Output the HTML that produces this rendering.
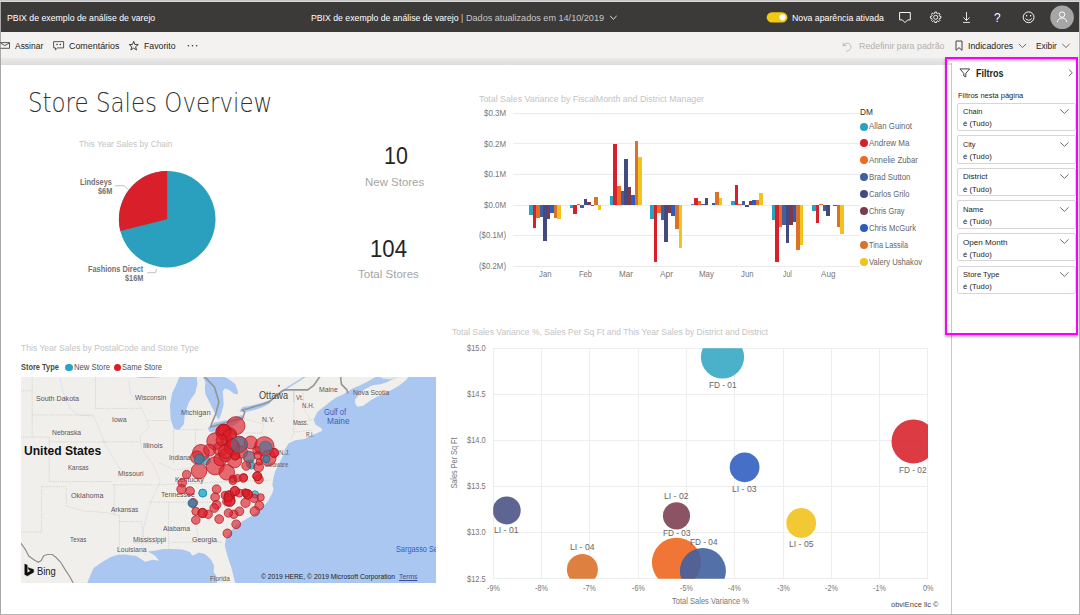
<!DOCTYPE html>
<html lang="pt-BR"><head><meta charset="utf-8"><title>PBIX de exemplo de análise de varejo</title><style>html,body{margin:0;padding:0}body{width:1080px;height:615px;overflow:hidden;background:#fff;position:relative;font-family:"Liberation Sans", sans-serif}.t{position:absolute;white-space:nowrap;transform-origin:0 50%;display:block}</style></head>
<body>
<div style="position:absolute;left:0;top:0;width:1080px;height:1px;background:#c6c6c6"></div>
<div style="position:absolute;left:0;top:1px;width:1080px;height:1px;background:#d9d9d9"></div>
<div style="position:absolute;left:0;top:2px;width:1080px;height:30px;background:#3b3a39"></div>
<div style="position:absolute;left:0;top:32px;width:1080px;height:26px;background:#f3f2f1"></div>
<div style="position:absolute;left:0;top:58px;width:952px;height:7px;background:linear-gradient(#e9e9e9,#dcdcdc)"></div>
<div style="position:absolute;left:951px;top:58px;width:129px;height:557px;background:#fff;border-left:1px solid #c8c8c8;box-sizing:border-box"></div>
<div style="position:absolute;left:947.5px;top:59px;width:128.5px;height:4px;background:linear-gradient(#b8b8b8,#e4e4e4 50%,#ffffff)"></div>
<div style="position:absolute;left:0;top:2px;width:1px;height:613px;background:#a8a8a8"></div>
<div style="position:absolute;left:1079px;top:2px;width:1px;height:613px;background:#b4b4b4"></div>
<div style="position:absolute;left:0;top:614px;width:1080px;height:1px;background:#b4b4b4"></div>
<div style="position:absolute;left:957px;top:102.50px;width:118.5px;height:28.4px;border:1px solid #d6d6d6;border-radius:2px;box-sizing:border-box;background:#fff"></div>
<svg style="position:absolute;left:1059px;top:107.90px" width="11" height="7" viewBox="0 0 11 7"><path d="M1.2 1.3 L5.4 5.4 L9.6 1.3" fill="none" stroke="#605e5c" stroke-width="0.9"/></svg>
<div style="position:absolute;left:957px;top:135.12px;width:118.5px;height:28.4px;border:1px solid #d6d6d6;border-radius:2px;box-sizing:border-box;background:#fff"></div>
<svg style="position:absolute;left:1059px;top:140.52px" width="11" height="7" viewBox="0 0 11 7"><path d="M1.2 1.3 L5.4 5.4 L9.6 1.3" fill="none" stroke="#605e5c" stroke-width="0.9"/></svg>
<div style="position:absolute;left:957px;top:167.74px;width:118.5px;height:28.4px;border:1px solid #d6d6d6;border-radius:2px;box-sizing:border-box;background:#fff"></div>
<svg style="position:absolute;left:1059px;top:173.14px" width="11" height="7" viewBox="0 0 11 7"><path d="M1.2 1.3 L5.4 5.4 L9.6 1.3" fill="none" stroke="#605e5c" stroke-width="0.9"/></svg>
<div style="position:absolute;left:957px;top:200.36px;width:118.5px;height:28.4px;border:1px solid #d6d6d6;border-radius:2px;box-sizing:border-box;background:#fff"></div>
<svg style="position:absolute;left:1059px;top:205.76px" width="11" height="7" viewBox="0 0 11 7"><path d="M1.2 1.3 L5.4 5.4 L9.6 1.3" fill="none" stroke="#605e5c" stroke-width="0.9"/></svg>
<div style="position:absolute;left:957px;top:232.98px;width:118.5px;height:28.4px;border:1px solid #d6d6d6;border-radius:2px;box-sizing:border-box;background:#fff"></div>
<svg style="position:absolute;left:1059px;top:238.38px" width="11" height="7" viewBox="0 0 11 7"><path d="M1.2 1.3 L5.4 5.4 L9.6 1.3" fill="none" stroke="#605e5c" stroke-width="0.9"/></svg>
<div style="position:absolute;left:957px;top:265.60px;width:118.5px;height:28.4px;border:1px solid #d6d6d6;border-radius:2px;box-sizing:border-box;background:#fff"></div>
<svg style="position:absolute;left:1059px;top:271.00px" width="11" height="7" viewBox="0 0 11 7"><path d="M1.2 1.3 L5.4 5.4 L9.6 1.3" fill="none" stroke="#605e5c" stroke-width="0.9"/></svg>
<svg style="position:absolute;left:0;top:0" width="300" height="300" viewBox="0 0 300 300"><circle cx="167.20" cy="219.20" r="48.30" fill="#2ba0be"/><path d="M167.20 219.20 L167.20 170.90 A48.30 48.30 0 0 0 120.38 231.05 Z" fill="#d81f2a"/><path d="M115.1 185.7 L123.9 185.7 L127.9 189.4" fill="none" stroke="#a6a6a6" stroke-width="0.7"/><path d="M147.2 272.7 L155.4 272.7 L156.8 268.7" fill="none" stroke="#a6a6a6" stroke-width="0.7"/></svg>
<svg style="position:absolute;left:0;top:0" width="950" height="300" viewBox="0 0 950 300" shape-rendering="crispEdges"><rect x="513" y="112.95" width="346.5" height="1" fill="#ebebeb"/><rect x="513" y="143.48" width="346.5" height="1" fill="#ebebeb"/><rect x="513" y="174.01" width="346.5" height="1" fill="#ebebeb"/><rect x="513" y="204.54" width="346.5" height="1" fill="#ebebeb"/><rect x="513" y="235.07" width="346.5" height="1" fill="#ebebeb"/><rect x="513" y="265.60" width="346.5" height="1" fill="#ebebeb"/><rect x="529.10" y="205.00" width="3.52" height="10.00" fill="#2ba2c0"/><rect x="532.62" y="205.00" width="3.52" height="22.80" fill="#d8202a"/><rect x="536.14" y="205.00" width="3.52" height="13.00" fill="#ee6a24"/><rect x="539.66" y="205.00" width="3.52" height="11.80" fill="#40609f"/><rect x="543.18" y="205.00" width="3.52" height="35.50" fill="#434a80"/><rect x="546.70" y="205.00" width="3.52" height="14.00" fill="#7b3b4d"/><rect x="550.22" y="205.00" width="3.52" height="8.40" fill="#2c5cc0"/><rect x="553.74" y="205.00" width="3.52" height="13.00" fill="#da722a"/><rect x="557.26" y="205.00" width="3.52" height="14.00" fill="#f1c31e"/><rect x="569.52" y="205.00" width="3.52" height="2.70" fill="#2ba2c0"/><rect x="573.04" y="205.00" width="3.52" height="9.00" fill="#d8202a"/><rect x="576.56" y="204.00" width="3.52" height="1.00" fill="#ee6a24"/><rect x="580.08" y="205.00" width="3.52" height="2.70" fill="#40609f"/><rect x="583.60" y="199.30" width="3.52" height="5.70" fill="#434a80"/><rect x="587.12" y="201.60" width="3.52" height="3.40" fill="#7b3b4d"/><rect x="590.64" y="205.00" width="3.52" height="1.00" fill="#2c5cc0"/><rect x="594.16" y="196.80" width="3.52" height="8.20" fill="#da722a"/><rect x="597.68" y="205.00" width="3.52" height="4.50" fill="#f1c31e"/><rect x="609.94" y="196.30" width="3.52" height="8.70" fill="#2ba2c0"/><rect x="613.46" y="144.40" width="3.52" height="60.60" fill="#d8202a"/><rect x="616.98" y="186.10" width="3.52" height="18.90" fill="#ee6a24"/><rect x="620.50" y="191.30" width="3.52" height="13.70" fill="#40609f"/><rect x="624.02" y="159.20" width="3.52" height="45.80" fill="#434a80"/><rect x="627.54" y="187.20" width="3.52" height="17.80" fill="#7b3b4d"/><rect x="631.06" y="194.50" width="3.52" height="10.50" fill="#2c5cc0"/><rect x="634.58" y="141.00" width="3.52" height="64.00" fill="#da722a"/><rect x="638.10" y="156.50" width="3.52" height="48.50" fill="#f1c31e"/><rect x="650.36" y="205.00" width="3.52" height="13.70" fill="#2ba2c0"/><rect x="653.88" y="205.00" width="3.52" height="57.00" fill="#d8202a"/><rect x="657.40" y="205.00" width="3.52" height="8.40" fill="#ee6a24"/><rect x="660.92" y="205.00" width="3.52" height="15.30" fill="#40609f"/><rect x="664.44" y="205.00" width="3.52" height="37.40" fill="#434a80"/><rect x="667.96" y="205.00" width="3.52" height="8.40" fill="#7b3b4d"/><rect x="671.48" y="205.00" width="3.52" height="11.40" fill="#2c5cc0"/><rect x="675.00" y="205.00" width="3.52" height="23.70" fill="#da722a"/><rect x="678.52" y="205.00" width="3.52" height="43.00" fill="#f1c31e"/><rect x="690.78" y="204.30" width="3.52" height="0.70" fill="#2ba2c0"/><rect x="694.30" y="197.50" width="3.52" height="7.50" fill="#d8202a"/><rect x="697.82" y="201.10" width="3.52" height="3.90" fill="#ee6a24"/><rect x="701.34" y="204.00" width="3.52" height="1.00" fill="#40609f"/><rect x="704.86" y="198.20" width="3.52" height="6.80" fill="#434a80"/><rect x="708.38" y="204.50" width="3.52" height="0.50" fill="#7b3b4d"/><rect x="711.90" y="203.40" width="3.52" height="1.60" fill="#2c5cc0"/><rect x="715.42" y="192.20" width="3.52" height="12.80" fill="#da722a"/><rect x="718.94" y="197.50" width="3.52" height="7.50" fill="#f1c31e"/><rect x="731.20" y="201.40" width="3.52" height="3.60" fill="#2ba2c0"/><rect x="734.72" y="185.20" width="3.52" height="19.80" fill="#d8202a"/><rect x="738.24" y="204.00" width="3.52" height="1.00" fill="#ee6a24"/><rect x="741.76" y="200.90" width="3.52" height="4.10" fill="#40609f"/><rect x="745.28" y="205.00" width="3.52" height="2.00" fill="#434a80"/><rect x="748.80" y="200.90" width="3.52" height="4.10" fill="#7b3b4d"/><rect x="752.32" y="199.80" width="3.52" height="5.20" fill="#2c5cc0"/><rect x="755.84" y="199.80" width="3.52" height="5.20" fill="#da722a"/><rect x="759.36" y="193.40" width="3.52" height="11.60" fill="#f1c31e"/><rect x="771.62" y="205.00" width="3.52" height="15.40" fill="#2ba2c0"/><rect x="775.14" y="205.00" width="3.52" height="57.30" fill="#d8202a"/><rect x="778.66" y="205.00" width="3.52" height="21.90" fill="#ee6a24"/><rect x="782.18" y="205.00" width="3.52" height="20.00" fill="#40609f"/><rect x="785.70" y="205.00" width="3.52" height="37.80" fill="#434a80"/><rect x="789.22" y="205.00" width="3.52" height="20.00" fill="#7b3b4d"/><rect x="792.74" y="205.00" width="3.52" height="16.70" fill="#2c5cc0"/><rect x="796.26" y="205.00" width="3.52" height="45.30" fill="#da722a"/><rect x="799.78" y="205.00" width="3.52" height="40.00" fill="#f1c31e"/><rect x="812.04" y="205.00" width="3.52" height="5.70" fill="#2ba2c0"/><rect x="815.56" y="205.00" width="3.52" height="18.20" fill="#d8202a"/><rect x="819.08" y="204.00" width="3.52" height="1.00" fill="#ee6a24"/><rect x="822.60" y="205.00" width="3.52" height="5.70" fill="#40609f"/><rect x="826.12" y="205.00" width="3.52" height="11.00" fill="#434a80"/><rect x="829.64" y="204.50" width="3.52" height="0.50" fill="#7b3b4d"/><rect x="833.16" y="205.00" width="3.52" height="1.00" fill="#2c5cc0"/><rect x="836.68" y="205.00" width="3.52" height="21.90" fill="#da722a"/><rect x="840.20" y="205.00" width="3.52" height="29.40" fill="#f1c31e"/></svg>
<div style="position:absolute;left:860.40px;top:122.50px;width:8px;height:8px;border-radius:50%;background:#2ba2c0"></div>
<div style="position:absolute;left:860.40px;top:139.48px;width:8px;height:8px;border-radius:50%;background:#d8202a"></div>
<div style="position:absolute;left:860.40px;top:156.46px;width:8px;height:8px;border-radius:50%;background:#ee6a24"></div>
<div style="position:absolute;left:860.40px;top:173.44px;width:8px;height:8px;border-radius:50%;background:#40609f"></div>
<div style="position:absolute;left:860.40px;top:190.42px;width:8px;height:8px;border-radius:50%;background:#434a80"></div>
<div style="position:absolute;left:860.40px;top:207.40px;width:8px;height:8px;border-radius:50%;background:#7b3b4d"></div>
<div style="position:absolute;left:860.40px;top:224.38px;width:8px;height:8px;border-radius:50%;background:#2c5cc0"></div>
<div style="position:absolute;left:860.40px;top:241.36px;width:8px;height:8px;border-radius:50%;background:#da722a"></div>
<div style="position:absolute;left:860.40px;top:258.34px;width:8px;height:8px;border-radius:50%;background:#f1c31e"></div>
<svg style="position:absolute;left:0;top:0" width="950" height="615" viewBox="0 0 950 615"><g shape-rendering="crispEdges"><rect x="493.20" y="347.70" width="434.80" height="1" fill="#eeeeee"/><rect x="493.20" y="393.82" width="434.80" height="1" fill="#eeeeee"/><rect x="493.20" y="439.94" width="434.80" height="1" fill="#eeeeee"/><rect x="493.20" y="486.06" width="434.80" height="1" fill="#eeeeee"/><rect x="493.20" y="532.18" width="434.80" height="1" fill="#eeeeee"/><rect x="493.20" y="578.30" width="434.80" height="1" fill="#eeeeee"/><rect x="492.70" y="348.20" width="1" height="230.60" fill="#eeeeee"/><rect x="541.01" y="348.20" width="1" height="230.60" fill="#eeeeee"/><rect x="589.32" y="348.20" width="1" height="230.60" fill="#eeeeee"/><rect x="637.63" y="348.20" width="1" height="230.60" fill="#eeeeee"/><rect x="685.94" y="348.20" width="1" height="230.60" fill="#eeeeee"/><rect x="734.25" y="348.20" width="1" height="230.60" fill="#eeeeee"/><rect x="782.56" y="348.20" width="1" height="230.60" fill="#eeeeee"/><rect x="830.87" y="348.20" width="1" height="230.60" fill="#eeeeee"/><rect x="879.18" y="348.20" width="1" height="230.60" fill="#eeeeee"/><rect x="927.49" y="348.20" width="1" height="230.60" fill="#eeeeee"/></g><clipPath id="pc"><rect x="493.20" y="348.20" width="434.80" height="230.60"/></clipPath><g clip-path="url(#pc)"><circle cx="722.5" cy="357.0" r="21.6" fill="#2ba2c0" fill-opacity="0.85"/><circle cx="913.5" cy="441.4" r="22.0" fill="#d8202a" fill-opacity="0.88"/><circle cx="744.6" cy="467.3" r="14.9" fill="#2c5cc0" fill-opacity="0.88"/><circle cx="801.2" cy="523.0" r="14.9" fill="#f1c31e" fill-opacity="0.90"/><circle cx="506.7" cy="510.4" r="14.0" fill="#434a80" fill-opacity="0.85"/><circle cx="582.4" cy="569.4" r="15.5" fill="#da722a" fill-opacity="0.90"/><circle cx="676.5" cy="515.8" r="13.6" fill="#7b3b4d" fill-opacity="0.88"/><circle cx="676.5" cy="562.3" r="24.6" fill="#ee6a24" fill-opacity="0.92"/><circle cx="702.9" cy="571.0" r="23.0" fill="#40609f" fill-opacity="0.90"/></g></svg>
<div style="position:absolute;left:455.3px;top:463.2px;width:0;height:0"><div id="rot" style="position:absolute;white-space:nowrap;font-size:8.2px;color:#777;line-height:10px;transform:translate(-50%,-50%) rotate(-90deg) scaleX(0.892);">Sales Per Sq Ft</div></div>
<div style="position:absolute;left:65.1px;top:363.5px;width:7.8px;height:7.8px;border-radius:50%;background:#2ba2c0"></div>
<div style="position:absolute;left:113.7px;top:363.5px;width:7.8px;height:7.8px;border-radius:50%;background:#d8202a"></div>
<div style="position:absolute;left:21.4px;top:376.9px;width:414.4px;height:206.5px;overflow:hidden;background:#f1efeb"><svg style="position:absolute;left:0;top:0" width="414.4" height="206.5" viewBox="21.4 376.9 414.4 206.5" font-family="'Liberation Sans', sans-serif"><polygon points="377.9,376.0 373.8,378.1 368.7,381.1 360.6,385.2 353.4,388.2 348.3,391.3 343.2,394.4 336.1,397.6 331.0,401.5 323.3,407.4 317.8,412.0 314.1,419.4 315.9,424.6 321.5,427.8 322.8,430.6 317.8,432.8 313.1,434.6 304.8,438.9 295.6,440.2 289.1,443.1 285.4,449.1 283.0,456.5 279.3,463.9 275.6,471.3 273.6,478.7 272.8,485.2 274.0,489.0 272.5,493.5 268.5,501.0 262.0,508.3 251.0,516.5 240.0,523.0 235.9,525.5 231.9,530.1 226.3,538.2 225.2,545.4 227.8,555.6 231.9,567.8 235.9,584.0 440.0,584.0 440.0,376.0" fill="#a9c7f0"/><polygon points="355.5,399.4 359.5,394.4 364.6,389.3 372.8,385.2 380.9,384.2 387.0,382.1 391.1,380.1 396.2,378.1 401.3,376.0 409.4,376.0 406.4,380.1 401.3,384.2 395.2,388.2 387.0,392.3 377.9,396.4 370.7,400.5 363.6,405.6 357.5,406.6 355.5,403.0" fill="#f1efeb"/><polygon points="378.0,376.0 401.0,376.0 396.0,378.3 390.0,379.2 384.0,378.6" fill="#dfe6f0"/><polygon points="87.2,584.0 90.7,575.3 93.8,568.2 101.0,563.0 111.2,556.9 117.4,554.8 125.6,554.3 131.7,555.3 136.1,555.6 141.2,558.6 145.3,561.7 153.4,559.6 159.5,560.6 155.5,555.6 148.3,551.5 156.5,550.5 163.6,548.9 172.8,548.9 183.0,549.4 190.1,552.0 193.1,555.6 199.3,552.5 205.4,554.0 211.5,559.6 214.5,565.7 214.0,571.9 216.6,576.0 217.6,584.0" fill="#a9c7f0"/><polygon points="180.0,376.0 176.3,385.4 172.6,392.8 170.4,404.6 171.1,419.4 174.1,428.3 179.3,429.8 184.4,423.9 185.2,413.5 189.6,401.7 195.6,392.8 197.8,383.9 197.0,376.0" fill="#a9c7f0"/><polygon points="202.2,376.0 223.7,376.0 229.6,379.4 235.6,383.9 237.8,389.8 238.5,394.3 234.1,393.5 229.6,389.8 225.2,388.3 223.0,391.3 223.7,397.2 224.0,404.6 222.2,412.0 220.0,418.0 218.5,419.4 215.6,413.5 211.9,406.1 208.9,400.2 205.9,394.3 205.2,388.3 205.9,382.4 203.0,376.0" fill="#a9c7f0"/><polygon points="132.0,376.0 140.0,377.6 152.0,377.9 160.0,377.2 163.0,376.0" fill="#a9c7f0"/><polygon points="208.0,428.0 215.0,422.5 228.0,420.0 242.0,415.0 245.0,418.0 235.0,425.0 220.0,431.0 210.0,432.0" fill="#a9c7f0"/><polygon points="240.0,410.6 243.0,406.9 251.9,405.4 263.7,402.4 269.6,400.2 270.4,403.1 263.7,406.9 254.8,409.8 245.9,412.0 240.7,412.0" fill="#a9c7f0"/><polyline points="269.6,401.7 278.5,394.3 283.0,390.6 292.0,385.0 300.0,380.0 306.0,376.0" fill="none" stroke="#a9c7f0" stroke-width="1.6"/><polyline points="294.2,391.0 294.4,402.0" fill="none" stroke="#a9c7f0" stroke-width="0.9"/><polyline points="60.0,377.0 63.0,390.0 66.0,400.0 72.0,410.0 80.0,415.0 94.0,416.0 98.0,425.0 103.0,438.0 110.0,452.0 116.0,462.0 122.0,470.0" fill="none" stroke="#d3dfee" stroke-width="0.7"/><polyline points="129.0,380.0 131.0,393.5 142.2,408.3 149.6,426.9 140.4,436.1 142.2,449.0 153.3,463.9 160.7,481.5 152.0,500.0 146.0,520.0 141.0,540.0 147.0,556.0" fill="none" stroke="#d3dfee" stroke-width="0.7"/><polyline points="32.6,377.0 32.6,436.0" fill="none" stroke="#cbc6c0" stroke-width="0.7" stroke-dasharray="1.2 1.2"/><polyline points="32.6,414.8 94.0,414.8" fill="none" stroke="#cbc6c0" stroke-width="0.7" stroke-dasharray="1.2 1.2"/><polyline points="21.0,390.7 32.6,390.7" fill="none" stroke="#cbc6c0" stroke-width="0.7" stroke-dasharray="1.2 1.2"/><polyline points="21.0,437.0 49.6,437.0 49.6,481.5 112.6,481.5" fill="none" stroke="#cbc6c0" stroke-width="0.7" stroke-dasharray="1.2 1.2"/><polyline points="49.6,441.7 107.0,441.7" fill="none" stroke="#cbc6c0" stroke-width="0.7" stroke-dasharray="1.2 1.2"/><polyline points="95.9,377.0 95.9,408.3 142.2,408.3" fill="none" stroke="#cbc6c0" stroke-width="0.7" stroke-dasharray="1.2 1.2"/><polyline points="103.0,441.7 140.0,441.7" fill="none" stroke="#cbc6c0" stroke-width="0.7" stroke-dasharray="1.2 1.2"/><polyline points="147.8,420.4 170.0,420.4" fill="none" stroke="#cbc6c0" stroke-width="0.7" stroke-dasharray="1.2 1.2"/><polyline points="173.7,430.6 173.7,464.0" fill="none" stroke="#cbc6c0" stroke-width="0.7" stroke-dasharray="1.2 1.2"/><polyline points="195.9,429.6 195.9,453.0" fill="none" stroke="#cbc6c0" stroke-width="0.7" stroke-dasharray="1.2 1.2"/><polyline points="173.7,429.6 205.0,429.6" fill="none" stroke="#cbc6c0" stroke-width="0.7" stroke-dasharray="1.2 1.2"/><polyline points="42.0,486.5 66.7,486.5 66.7,506.0 84.8,511.0 105.6,512.4 118.5,515.0" fill="none" stroke="#cbc6c0" stroke-width="0.7" stroke-dasharray="1.2 1.2"/><polyline points="42.0,486.5 42.0,531.9 21.0,531.9" fill="none" stroke="#cbc6c0" stroke-width="0.7" stroke-dasharray="1.2 1.2"/><polyline points="113.0,484.7 154.8,484.7" fill="none" stroke="#cbc6c0" stroke-width="0.7" stroke-dasharray="1.2 1.2"/><polyline points="114.6,484.7 114.6,515.0" fill="none" stroke="#cbc6c0" stroke-width="0.7" stroke-dasharray="1.2 1.2"/><polyline points="119.8,521.5 141.9,521.5" fill="none" stroke="#cbc6c0" stroke-width="0.7" stroke-dasharray="1.2 1.2"/><polyline points="119.8,515.0 119.8,555.0" fill="none" stroke="#cbc6c0" stroke-width="0.7" stroke-dasharray="1.2 1.2"/><polyline points="141.9,521.5 144.5,539.6 134.0,542.7 157.4,542.7" fill="none" stroke="#cbc6c0" stroke-width="0.7" stroke-dasharray="1.2 1.2"/><polyline points="149.6,502.0 222.0,502.0" fill="none" stroke="#cbc6c0" stroke-width="0.7" stroke-dasharray="1.2 1.2"/><polyline points="169.0,502.0 169.0,552.6" fill="none" stroke="#cbc6c0" stroke-width="0.7" stroke-dasharray="1.2 1.2"/><polyline points="193.2,502.0 198.9,539.6" fill="none" stroke="#cbc6c0" stroke-width="0.7" stroke-dasharray="1.2 1.2"/><polyline points="173.0,542.2 222.0,542.2" fill="none" stroke="#cbc6c0" stroke-width="0.7" stroke-dasharray="1.2 1.2"/><polyline points="157.0,484.7 200.0,483.0 240.0,481.0 272.0,480.0" fill="none" stroke="#cbc6c0" stroke-width="0.7" stroke-dasharray="1.2 1.2"/><polyline points="222.0,502.0 245.0,497.0 262.0,500.0" fill="none" stroke="#cbc6c0" stroke-width="0.7" stroke-dasharray="1.2 1.2"/><polyline points="200.0,483.0 212.0,470.0 225.0,466.0 236.0,458.0" fill="none" stroke="#cbc6c0" stroke-width="0.7" stroke-dasharray="1.2 1.2"/><polyline points="236.0,458.0 250.0,462.0 262.0,458.0" fill="none" stroke="#cbc6c0" stroke-width="0.7" stroke-dasharray="1.2 1.2"/><polyline points="214.0,433.0 214.0,455.0" fill="none" stroke="#cbc6c0" stroke-width="0.7" stroke-dasharray="1.2 1.2"/><polyline points="214.0,433.0 262.0,433.0 268.0,438.0 275.0,441.0" fill="none" stroke="#cbc6c0" stroke-width="0.7" stroke-dasharray="1.2 1.2"/><polyline points="262.0,433.0 264.0,424.0 243.0,418.0" fill="none" stroke="#cbc6c0" stroke-width="0.7" stroke-dasharray="1.2 1.2"/><polyline points="294.3,402.0 294.3,432.0 291.0,440.0" fill="none" stroke="#cbc6c0" stroke-width="0.7" stroke-dasharray="1.2 1.2"/><polyline points="294.3,422.0 318.0,419.0" fill="none" stroke="#cbc6c0" stroke-width="0.7" stroke-dasharray="1.2 1.2"/><polyline points="303.0,390.0 305.0,410.0 311.0,420.0" fill="none" stroke="#cbc6c0" stroke-width="0.7" stroke-dasharray="1.2 1.2"/><polyline points="294.3,432.0 312.0,430.0" fill="none" stroke="#cbc6c0" stroke-width="0.7" stroke-dasharray="1.2 1.2"/><polyline points="222.0,502.0 238.0,526.0" fill="none" stroke="#cbc6c0" stroke-width="0.7" stroke-dasharray="1.2 1.2"/><polyline points="198.9,539.6 222.0,542.2" fill="none" stroke="#cbc6c0" stroke-width="0.7" stroke-dasharray="1.2 1.2"/><polyline points="160.0,463.0 175.0,470.0 190.0,468.0 200.0,483.0" fill="none" stroke="#cbc6c0" stroke-width="0.7" stroke-dasharray="1.2 1.2"/><polyline points="204.4,376.0 214.8,386.9 219.3,401.7 216.3,413.5 211.9,423.9 211.1,426.9 225.0,423.0 243.0,418.0 245.2,412.0 243.0,409.8 248.9,408.3 263.7,403.9 269.6,401.7 278.5,394.3 283.0,390.6 285.9,389.8 308.1,389.8 314.1,385.4 320.6,376.0" fill="none" stroke="#949494" stroke-width="1.6"/><polyline points="340.9,376.0 341.9,384.3 347.4,389.8 348.3,393.5" fill="none" stroke="#949494" stroke-width="1.6"/><polyline points="20.0,541.5 23.5,546.0 26.1,550.0 29.1,555.9 34.3,559.6 38.7,562.2 41.7,560.4 43.9,555.9 47.6,554.4 52.8,554.4 56.5,557.4 60.9,561.9 65.4,569.3 69.8,575.9 73.5,582.6 74.0,584.0" fill="none" stroke="#8f8f8f" stroke-width="1.2"/><circle cx="279.4" cy="385.7" r="1" fill="#e0322c"/><text x="265.6" y="467.3" font-size="7.3" fill="#6e5c5c" textLength="23" lengthAdjust="spacingAndGlyphs">Delaware</text><text x="396.4" y="551.6" font-size="8.6" fill="#3560c0" textLength="46" lengthAdjust="spacingAndGlyphs">Sargasso Sea</text></svg></div><div style="position:absolute;left:21.4px;top:376.9px;width:414.4px;height:206.5px;overflow:hidden;z-index:5"><svg style="position:absolute;left:0;top:0" width="414.4" height="206.5" viewBox="21.4 376.9 414.4 206.5"><circle cx="239.5" cy="444.4" r="8.0" fill="#3fb6d3" fill-opacity="0.8" stroke="#2390ae" stroke-width="0.9"/><circle cx="265.9" cy="447.6" r="6.5" fill="#3fb6d3" fill-opacity="0.8" stroke="#2390ae" stroke-width="0.9"/><circle cx="206.5" cy="460.3" r="4.2" fill="#3fb6d3" fill-opacity="0.8" stroke="#2390ae" stroke-width="0.9"/><circle cx="250.6" cy="463.8" r="3.9" fill="#3fb6d3" fill-opacity="0.8" stroke="#2390ae" stroke-width="0.9"/><circle cx="203.1" cy="493.0" r="3.9" fill="#3fb6d3" fill-opacity="0.8" stroke="#2390ae" stroke-width="0.9"/><circle cx="255.4" cy="494.3" r="3.6" fill="#3fb6d3" fill-opacity="0.8" stroke="#2390ae" stroke-width="0.9"/><circle cx="252.2" cy="465.7" r="3.3" fill="#3fb6d3" fill-opacity="0.8" stroke="#2390ae" stroke-width="0.9"/><circle cx="236.3" cy="425.6" r="9.1" fill="#dc1f2a" fill-opacity="0.64" stroke="#ab121c" stroke-width="0.7"/><circle cx="224.0" cy="432.0" r="7.8" fill="#dc1f2a" fill-opacity="0.64" stroke="#ab121c" stroke-width="0.7"/><circle cx="224.6" cy="431.4" r="6.5" fill="#dc1f2a" fill-opacity="0.64" stroke="#ab121c" stroke-width="0.7"/><circle cx="230.0" cy="434.6" r="7.1" fill="#dc1f2a" fill-opacity="0.64" stroke="#ab121c" stroke-width="0.7"/><circle cx="215.6" cy="441.1" r="8.4" fill="#dc1f2a" fill-opacity="0.64" stroke="#ab121c" stroke-width="0.7"/><circle cx="239.5" cy="444.4" r="8.4" fill="#dc1f2a" fill-opacity="0.64" stroke="#ab121c" stroke-width="0.7"/><circle cx="232.4" cy="447.6" r="7.8" fill="#dc1f2a" fill-opacity="0.64" stroke="#ab121c" stroke-width="0.7"/><circle cx="220.7" cy="448.9" r="7.1" fill="#dc1f2a" fill-opacity="0.64" stroke="#ab121c" stroke-width="0.7"/><circle cx="235.7" cy="455.4" r="4.5" fill="#dc1f2a" fill-opacity="0.64" stroke="#ab121c" stroke-width="0.7"/><circle cx="251.2" cy="442.4" r="6.5" fill="#dc1f2a" fill-opacity="0.64" stroke="#ab121c" stroke-width="0.7"/><circle cx="264.8" cy="446.3" r="9.7" fill="#dc1f2a" fill-opacity="0.64" stroke="#ab121c" stroke-width="0.7"/><circle cx="274.5" cy="452.8" r="4.5" fill="#dc1f2a" fill-opacity="0.64" stroke="#ab121c" stroke-width="0.7"/><circle cx="268.7" cy="458.0" r="7.8" fill="#dc1f2a" fill-opacity="0.64" stroke="#ab121c" stroke-width="0.7"/><circle cx="257.0" cy="450.2" r="3.9" fill="#dc1f2a" fill-opacity="0.64" stroke="#ab121c" stroke-width="0.7"/><circle cx="258.3" cy="455.4" r="3.9" fill="#dc1f2a" fill-opacity="0.64" stroke="#ab121c" stroke-width="0.7"/><circle cx="249.3" cy="456.7" r="5.8" fill="#dc1f2a" fill-opacity="0.64" stroke="#ab121c" stroke-width="0.7"/><circle cx="201.3" cy="452.8" r="8.4" fill="#dc1f2a" fill-opacity="0.64" stroke="#ab121c" stroke-width="0.7"/><circle cx="197.4" cy="457.3" r="6.5" fill="#dc1f2a" fill-opacity="0.64" stroke="#ab121c" stroke-width="0.7"/><circle cx="199.4" cy="470.9" r="7.8" fill="#dc1f2a" fill-opacity="0.64" stroke="#ab121c" stroke-width="0.7"/><circle cx="187.0" cy="474.4" r="4.1" fill="#dc1f2a" fill-opacity="0.64" stroke="#ab121c" stroke-width="0.7"/><circle cx="215.6" cy="465.7" r="9.1" fill="#dc1f2a" fill-opacity="0.64" stroke="#ab121c" stroke-width="0.7"/><circle cx="220.7" cy="459.3" r="6.5" fill="#dc1f2a" fill-opacity="0.64" stroke="#ab121c" stroke-width="0.7"/><circle cx="227.2" cy="472.2" r="7.8" fill="#dc1f2a" fill-opacity="0.64" stroke="#ab121c" stroke-width="0.7"/><circle cx="235.0" cy="460.6" r="7.1" fill="#dc1f2a" fill-opacity="0.64" stroke="#ab121c" stroke-width="0.7"/><circle cx="246.7" cy="465.7" r="4.5" fill="#dc1f2a" fill-opacity="0.64" stroke="#ab121c" stroke-width="0.7"/><circle cx="259.0" cy="467.0" r="4.9" fill="#dc1f2a" fill-opacity="0.64" stroke="#ab121c" stroke-width="0.7"/><circle cx="257.7" cy="476.1" r="4.5" fill="#dc1f2a" fill-opacity="0.64" stroke="#ab121c" stroke-width="0.7"/><circle cx="244.1" cy="477.4" r="3.9" fill="#dc1f2a" fill-opacity="0.64" stroke="#ab121c" stroke-width="0.7"/><circle cx="233.7" cy="478.7" r="3.9" fill="#dc1f2a" fill-opacity="0.64" stroke="#ab121c" stroke-width="0.7"/><circle cx="259.6" cy="461.9" r="3.2" fill="#dc1f2a" fill-opacity="0.64" stroke="#ab121c" stroke-width="0.7"/><circle cx="228.0" cy="441.0" r="6.0" fill="#dc1f2a" fill-opacity="0.64" stroke="#ab121c" stroke-width="0.7"/><circle cx="242.0" cy="452.0" r="6.0" fill="#dc1f2a" fill-opacity="0.64" stroke="#ab121c" stroke-width="0.7"/><circle cx="226.0" cy="455.0" r="6.5" fill="#dc1f2a" fill-opacity="0.64" stroke="#ab121c" stroke-width="0.7"/><circle cx="210.0" cy="450.0" r="6.0" fill="#dc1f2a" fill-opacity="0.64" stroke="#ab121c" stroke-width="0.7"/><circle cx="182.6" cy="482.6" r="4.3" fill="#dc1f2a" fill-opacity="0.64" stroke="#ab121c" stroke-width="0.7"/><circle cx="181.9" cy="489.1" r="4.7" fill="#dc1f2a" fill-opacity="0.64" stroke="#ab121c" stroke-width="0.7"/><circle cx="190.4" cy="491.0" r="4.4" fill="#dc1f2a" fill-opacity="0.64" stroke="#ab121c" stroke-width="0.7"/><circle cx="193.6" cy="502.7" r="4.4" fill="#dc1f2a" fill-opacity="0.64" stroke="#ab121c" stroke-width="0.7"/><circle cx="217.0" cy="489.1" r="4.4" fill="#dc1f2a" fill-opacity="0.64" stroke="#ab121c" stroke-width="0.7"/><circle cx="215.5" cy="497.1" r="4.4" fill="#dc1f2a" fill-opacity="0.64" stroke="#ab121c" stroke-width="0.7"/><circle cx="217.0" cy="504.7" r="4.4" fill="#dc1f2a" fill-opacity="0.64" stroke="#ab121c" stroke-width="0.7"/><circle cx="214.7" cy="507.9" r="4.4" fill="#dc1f2a" fill-opacity="0.64" stroke="#ab121c" stroke-width="0.7"/><circle cx="196.2" cy="511.2" r="4.0" fill="#dc1f2a" fill-opacity="0.64" stroke="#ab121c" stroke-width="0.7"/><circle cx="203.0" cy="512.9" r="4.7" fill="#dc1f2a" fill-opacity="0.64" stroke="#ab121c" stroke-width="0.7"/><circle cx="208.6" cy="514.2" r="4.2" fill="#dc1f2a" fill-opacity="0.64" stroke="#ab121c" stroke-width="0.7"/><circle cx="196.2" cy="519.9" r="4.3" fill="#dc1f2a" fill-opacity="0.64" stroke="#ab121c" stroke-width="0.7"/><circle cx="219.6" cy="519.0" r="4.4" fill="#dc1f2a" fill-opacity="0.64" stroke="#ab121c" stroke-width="0.7"/><circle cx="225.5" cy="495.2" r="4.0" fill="#dc1f2a" fill-opacity="0.64" stroke="#ab121c" stroke-width="0.7"/><circle cx="229.7" cy="495.8" r="5.2" fill="#dc1f2a" fill-opacity="0.64" stroke="#ab121c" stroke-width="0.7"/><circle cx="235.3" cy="491.0" r="4.7" fill="#dc1f2a" fill-opacity="0.64" stroke="#ab121c" stroke-width="0.7"/><circle cx="239.8" cy="493.0" r="4.0" fill="#dc1f2a" fill-opacity="0.64" stroke="#ab121c" stroke-width="0.7"/><circle cx="230.1" cy="500.8" r="5.5" fill="#dc1f2a" fill-opacity="0.64" stroke="#ab121c" stroke-width="0.7"/><circle cx="227.5" cy="501.4" r="4.4" fill="#dc1f2a" fill-opacity="0.64" stroke="#ab121c" stroke-width="0.7"/><circle cx="245.7" cy="492.3" r="3.7" fill="#dc1f2a" fill-opacity="0.64" stroke="#ab121c" stroke-width="0.7"/><circle cx="248.3" cy="494.3" r="4.7" fill="#dc1f2a" fill-opacity="0.64" stroke="#ab121c" stroke-width="0.7"/><circle cx="254.5" cy="498.2" r="4.2" fill="#dc1f2a" fill-opacity="0.64" stroke="#ab121c" stroke-width="0.7"/><circle cx="261.0" cy="497.3" r="3.7" fill="#dc1f2a" fill-opacity="0.64" stroke="#ab121c" stroke-width="0.7"/><circle cx="245.9" cy="502.7" r="4.7" fill="#dc1f2a" fill-opacity="0.64" stroke="#ab121c" stroke-width="0.7"/><circle cx="259.7" cy="505.6" r="4.4" fill="#dc1f2a" fill-opacity="0.64" stroke="#ab121c" stroke-width="0.7"/><circle cx="255.2" cy="511.2" r="4.7" fill="#dc1f2a" fill-opacity="0.64" stroke="#ab121c" stroke-width="0.7"/><circle cx="239.8" cy="511.2" r="4.4" fill="#dc1f2a" fill-opacity="0.64" stroke="#ab121c" stroke-width="0.7"/><circle cx="234.2" cy="514.2" r="4.2" fill="#dc1f2a" fill-opacity="0.64" stroke="#ab121c" stroke-width="0.7"/><circle cx="228.8" cy="512.9" r="4.2" fill="#dc1f2a" fill-opacity="0.64" stroke="#ab121c" stroke-width="0.7"/><circle cx="236.6" cy="524.2" r="4.4" fill="#dc1f2a" fill-opacity="0.64" stroke="#ab121c" stroke-width="0.7"/><circle cx="227.8" cy="533.3" r="4.4" fill="#dc1f2a" fill-opacity="0.64" stroke="#ab121c" stroke-width="0.7"/><circle cx="233.3" cy="480.6" r="3.9" fill="#dc1f2a" fill-opacity="0.64" stroke="#ab121c" stroke-width="0.7"/><circle cx="237.9" cy="478.0" r="3.7" fill="#dc1f2a" fill-opacity="0.64" stroke="#ab121c" stroke-width="0.7"/><circle cx="243.7" cy="478.0" r="4.2" fill="#dc1f2a" fill-opacity="0.64" stroke="#ab121c" stroke-width="0.7"/><circle cx="259.3" cy="479.3" r="4.4" fill="#dc1f2a" fill-opacity="0.64" stroke="#ab121c" stroke-width="0.7"/><circle cx="224.0" cy="432.0" r="7.6" fill="#dc1f2a" fill-opacity="0.64" stroke="#ab121c" stroke-width="0.7"/><circle cx="224.6" cy="430.7" r="6.2" fill="#dc1f2a" fill-opacity="0.64" stroke="#ab121c" stroke-width="0.7"/><circle cx="229.8" cy="435.9" r="6.5" fill="#dc1f2a" fill-opacity="0.64" stroke="#ab121c" stroke-width="0.7"/><circle cx="232.4" cy="447.0" r="7.6" fill="#dc1f2a" fill-opacity="0.64" stroke="#ab121c" stroke-width="0.7"/><circle cx="226.0" cy="451.5" r="7.0" fill="#dc1f2a" fill-opacity="0.64" stroke="#ab121c" stroke-width="0.7"/><circle cx="235.7" cy="455.4" r="4.5" fill="#dc1f2a" fill-opacity="0.64" stroke="#ab121c" stroke-width="0.7"/><circle cx="233.0" cy="444.0" r="5.5" fill="#dc1f2a" fill-opacity="0.64" stroke="#ab121c" stroke-width="0.7"/><circle cx="222.0" cy="440.0" r="5.5" fill="#dc1f2a" fill-opacity="0.64" stroke="#ab121c" stroke-width="0.7"/><circle cx="274.5" cy="452.8" r="4.5" fill="#dc1f2a" fill-opacity="0.64" stroke="#ab121c" stroke-width="0.7"/><circle cx="229.7" cy="495.8" r="5.0" fill="#dc1f2a" fill-opacity="0.64" stroke="#ab121c" stroke-width="0.7"/><circle cx="235.3" cy="491.0" r="4.6" fill="#dc1f2a" fill-opacity="0.64" stroke="#ab121c" stroke-width="0.7"/><circle cx="248.3" cy="494.3" r="4.6" fill="#dc1f2a" fill-opacity="0.64" stroke="#ab121c" stroke-width="0.7"/><circle cx="230.1" cy="500.8" r="5.2" fill="#dc1f2a" fill-opacity="0.64" stroke="#ab121c" stroke-width="0.7"/><circle cx="257.7" cy="476.1" r="4.4" fill="#dc1f2a" fill-opacity="0.64" stroke="#ab121c" stroke-width="0.7"/><circle cx="228.5" cy="497.5" r="4.2" fill="#dc1f2a" fill-opacity="0.64" stroke="#ab121c" stroke-width="0.7"/><circle cx="246.5" cy="493.0" r="3.8" fill="#dc1f2a" fill-opacity="0.64" stroke="#ab121c" stroke-width="0.7"/><circle cx="203.0" cy="512.9" r="4.5" fill="#dc1f2a" fill-opacity="0.64" stroke="#ab121c" stroke-width="0.7"/><circle cx="199.7" cy="459.3" r="4.9" fill="#3f7fa3" fill-opacity="0.85" stroke="#1b6f8c" stroke-width="0.9"/><circle cx="266.8" cy="459.0" r="3.6" fill="#3f7fa3" fill-opacity="0.85" stroke="#1b6f8c" stroke-width="0.9"/><circle cx="192.7" cy="503.1" r="4.2" fill="#3f7fa3" fill-opacity="0.85" stroke="#1b6f8c" stroke-width="0.9"/><circle cx="203.1" cy="493.0" r="3.9" fill="#3fb6d3" fill-opacity="0.8" stroke="#2390ae" stroke-width="0.9"/><circle cx="239.5" cy="444.4" r="7.6" fill="#3a8fb3" fill-opacity="0.42" stroke="#2390ae" stroke-opacity="0.8" stroke-width="0.9"/><circle cx="265.9" cy="447.6" r="6.3" fill="#3a8fb3" fill-opacity="0.42" stroke="#2390ae" stroke-opacity="0.8" stroke-width="0.9"/><circle cx="249.3" cy="456.7" r="5.2" fill="#3a8fb3" fill-opacity="0.42" stroke="#2390ae" stroke-opacity="0.8" stroke-width="0.9"/><path d="M25.1 563.9 L27.7 564.8 L27.7 572.7 L31.3 570.7 L29.4 569.9 L28.3 567.3 L34.1 569.3 L34.1 572.2 L27.7 576 L25.1 574.5 Z" fill="#0c0c0c" stroke="#0c0c0c" stroke-width="0.3"/></svg></div>
<div style="position:absolute;left:945px;top:56.9px;width:133.2px;height:278.3px;border:2.5px solid #fa00fa;box-sizing:border-box;box-shadow:0 1.5px 2.5px rgba(0,0,0,0.33);z-index:9"></div>
<svg style="position:absolute;left:0;top:0;z-index:4" width="1080" height="62" viewBox="0 0 1080 62" fill="none" stroke-linecap="butt"><path d="M610.2 16 L613.4 19.2 L616.6 16" stroke="#ffffff" stroke-width="0.9"/><rect x="766.7" y="12.2" width="20.7" height="10.3" rx="5.15" fill="#f2c811"/><circle cx="782.5" cy="17.35" r="3.1" fill="#ffffff"/><path d="M899.6 12.5 H910.3 V19.9 H907.7 L905 22.6 L902.3 19.9 H899.6 Z" stroke="#ffffff" stroke-width="0.95" stroke-linejoin="miter"/><path d="M934.79 12.08 L936.61 12.08 L936.66 13.31 L937.84 13.80 L938.75 12.96 L940.04 14.25 L939.20 15.16 L939.69 16.34 L940.92 16.39 L940.92 18.21 L939.69 18.26 L939.20 19.44 L940.04 20.35 L938.75 21.64 L937.84 20.80 L936.66 21.29 L936.61 22.52 L934.79 22.52 L934.74 21.29 L933.56 20.80 L932.65 21.64 L931.36 20.35 L932.20 19.44 L931.71 18.26 L930.48 18.21 L930.48 16.39 L931.71 16.34 L932.20 15.16 L931.36 14.25 L932.65 12.96 L933.56 13.80 L934.74 13.31 Z" stroke="#ffffff" stroke-width="0.9" stroke-linejoin="round"/><circle cx="935.7" cy="17.3" r="2" stroke="#ffffff" stroke-width="0.9"/><path d="M966.5 12 V20.4 M963.4 17.4 L966.5 20.5 L969.6 17.4 M963.1 22.45 H969.9" stroke="#ffffff" stroke-width="0.85"/><circle cx="1028.6" cy="17.3" r="5.4" stroke="#ffffff" stroke-width="0.95"/><circle cx="1026.6" cy="15.7" r="0.75" fill="#ffffff"/><circle cx="1030.6" cy="15.7" r="0.75" fill="#ffffff"/><path d="M1025.4 18.6 Q1028.6 21.9 1031.8 18.6" stroke="#ffffff" stroke-width="0.9"/><circle cx="1062.1" cy="17.3" r="11.8" fill="#a6a6a6"/><circle cx="1062.1" cy="14.6" r="2.7" stroke="#ffffff" stroke-width="1"/><path d="M1057.3 22.3 C1057.8 16.6 1066.4 16.6 1066.9 22.3" stroke="#ffffff" stroke-width="1"/><path d="M0.5 42.6 H9.5 V48.3 H0.5 M0.5 43 L4.9 45.6 L9.5 42.9" stroke="#323130" stroke-width="0.8"/><path d="M53.6 41.6 H63.6 V47.9 H57.6 L55.5 49.9 V47.9 H53.6 Z" stroke="#323130" stroke-width="0.8"/><rect x="56.4" y="43.8" width="1.3" height="1.3" fill="#323130"/><rect x="59.7" y="43.8" width="1.3" height="1.3" fill="#323130"/><path d="M133.70 41.30 L134.88 44.48 L138.27 44.62 L135.60 46.72 L136.52 49.98 L133.70 48.10 L130.88 49.98 L131.80 46.72 L129.13 44.62 L132.52 44.48 Z" stroke="#323130" stroke-width="0.9" stroke-linejoin="miter"/><circle cx="188.4" cy="45.8" r="0.75" fill="#323130"/><circle cx="192.5" cy="45.8" r="0.75" fill="#323130"/><circle cx="196.6" cy="45.8" r="0.75" fill="#323130"/><path d="M843.2 42.6 L843.2 45.6 L846.2 45.6" stroke="#b3b0ad" stroke-width="0.9"/><path d="M843.4 45.4 C845 42.6 849.6 42.4 850.8 45.8 C851.6 48.4 849.4 50.6 846.2 51.4" stroke="#b3b0ad" stroke-width="0.9"/><path d="M956 41 H962 V50.3 L959 47.7 L956 50.3 Z" stroke="#323130" stroke-width="0.9"/><path d="M1018.8 43.9 L1022.5 47.5 L1026.2 43.9" stroke="#605e5c" stroke-width="0.9"/><path d="M1062.3 43.9 L1066 47.5 L1069.7 43.9" stroke="#605e5c" stroke-width="0.9"/></svg><svg style="position:absolute;left:955px;top:64px;z-index:4" width="122" height="18" viewBox="955 64 122 18" fill="none"><path d="M959.9 68.9 H969.7 L965.8 73.3 V76.9 L963.8 76 V73.3 Z" stroke="#323130" stroke-width="0.9" stroke-linejoin="round"/><path d="M1068.8 69.4 L1072.3 72.8 L1068.8 76.2" stroke="#605e5c" stroke-width="0.9"/></svg>
<span class="t" id="t0" style="left:6.60px;top:13.26px;font-size:8.60px;line-height:10.32px;color:#ffffff;transform:scaleX(1.0170);">PBIX de exemplo de análise de varejo</span>
<span class="t" id="t1" style="left:310.70px;top:13.26px;font-size:8.60px;line-height:10.32px;color:#ffffff;transform:scaleX(1.0129);">PBIX de exemplo de análise de varejo</span>
<span class="t" id="t2" style="left:460.80px;top:12.96px;font-size:8.60px;line-height:10.32px;color:#d2d0ce;transform:scaleX(0.9846);">|</span>
<span class="t" id="t3" style="left:466.00px;top:13.26px;font-size:8.60px;line-height:10.32px;color:#c8c6c4;transform:scaleX(1.0580);">Dados atualizados em 14/10/2019</span>
<span class="t" id="t4" style="left:792.30px;top:13.26px;font-size:8.60px;line-height:10.32px;color:#ffffff;transform:scaleX(1.0178);">Nova aparência ativada</span>
<span class="t" id="t5" style="left:994.20px;top:10.07px;font-size:13.20px;line-height:15.84px;color:#ffffff;transform:scaleX(0.8987);">?</span>
<span class="t" id="t6" style="left:14.80px;top:41.19px;font-size:8.90px;line-height:10.68px;color:#252423;transform:scaleX(0.9529);">Assinar</span>
<span class="t" id="t7" style="left:68.90px;top:41.19px;font-size:8.90px;line-height:10.68px;color:#252423;transform:scaleX(1.0017);">Comentários</span>
<span class="t" id="t8" style="left:144.40px;top:41.19px;font-size:8.90px;line-height:10.68px;color:#252423;transform:scaleX(0.9856);">Favorito</span>
<span class="t" id="t9" style="left:858.50px;top:41.19px;font-size:8.90px;line-height:10.68px;color:#b3b0ad;transform:scaleX(0.9958);">Redefinir para padrão</span>
<span class="t" id="t10" style="left:967.70px;top:41.19px;font-size:8.90px;line-height:10.68px;color:#252423;transform:scaleX(0.9850);">Indicadores</span>
<span class="t" id="t11" style="left:1035.60px;top:41.19px;font-size:8.90px;line-height:10.68px;color:#252423;transform:scaleX(0.9368);">Exibir</span>
<span class="t" id="t12" style="left:975.70px;top:67.18px;font-size:10.60px;line-height:12.72px;color:#252423;font-weight:700;transform:scaleX(0.8525);">Filtros</span>
<span class="t" id="t13" style="left:957.80px;top:91.20px;font-size:7.60px;line-height:9.12px;color:#252423;transform:scaleX(0.9837);">Filtros nesta página</span>
<span class="t" id="t14" style="left:962.80px;top:107.10px;font-size:7.60px;line-height:9.12px;color:#252423;transform:scaleX(0.9827);">Chain</span>
<span class="t" id="t15" style="left:962.80px;top:119.30px;font-size:7.60px;line-height:9.12px;color:#252423;transform:scaleX(1.0098);">é (Tudo)</span>
<span class="t" id="t16" style="left:962.80px;top:139.72px;font-size:7.60px;line-height:9.12px;color:#252423;transform:scaleX(0.9558);">City</span>
<span class="t" id="t17" style="left:962.80px;top:151.92px;font-size:7.60px;line-height:9.12px;color:#252423;transform:scaleX(1.0098);">é (Tudo)</span>
<span class="t" id="t18" style="left:962.80px;top:172.34px;font-size:7.60px;line-height:9.12px;color:#252423;transform:scaleX(1.0559);">District</span>
<span class="t" id="t19" style="left:962.80px;top:184.54px;font-size:7.60px;line-height:9.12px;color:#252423;transform:scaleX(1.0098);">é (Tudo)</span>
<span class="t" id="t20" style="left:962.80px;top:204.96px;font-size:7.60px;line-height:9.12px;color:#252423;transform:scaleX(1.0116);">Name</span>
<span class="t" id="t21" style="left:962.80px;top:217.16px;font-size:7.60px;line-height:9.12px;color:#252423;transform:scaleX(1.0098);">é (Tudo)</span>
<span class="t" id="t22" style="left:962.80px;top:237.58px;font-size:7.60px;line-height:9.12px;color:#252423;transform:scaleX(1.0647);">Open Month</span>
<span class="t" id="t23" style="left:962.80px;top:249.78px;font-size:7.60px;line-height:9.12px;color:#252423;transform:scaleX(1.0098);">é (Tudo)</span>
<span class="t" id="t24" style="left:962.80px;top:270.20px;font-size:7.60px;line-height:9.12px;color:#252423;transform:scaleX(0.9974);">Store Type</span>
<span class="t" id="t25" style="left:962.80px;top:282.40px;font-size:7.60px;line-height:9.12px;color:#252423;transform:scaleX(1.0098);">é (Tudo)</span>
<span class="t" id="t26" style="left:27.60px;top:86.80px;font-size:27.40px;line-height:32.88px;color:#333333;transform:scaleX(0.8379);font-family:'DejaVu Sans','Liberation Sans',sans-serif;font-weight:200;">Store Sales Overview</span>
<span class="t" id="t27" style="left:78.50px;top:138.66px;font-size:8.40px;line-height:10.08px;color:#c4c4c4;transform:scaleX(0.9992);">This Year Sales by Chain</span>
<span class="t" id="t28" style="left:80.20px;top:178.22px;font-size:8.30px;line-height:9.96px;color:#727272;font-weight:700;transform:scaleX(0.8869);">Lindseys</span>
<span class="t" id="t29" style="left:97.80px;top:186.92px;font-size:8.30px;line-height:9.96px;color:#727272;font-weight:700;transform:scaleX(0.8860);">$6M</span>
<span class="t" id="t30" style="left:88.30px;top:265.12px;font-size:8.30px;line-height:9.96px;color:#727272;font-weight:700;transform:scaleX(0.8884);">Fashions Direct</span>
<span class="t" id="t31" style="left:125.30px;top:273.82px;font-size:8.30px;line-height:9.96px;color:#727272;font-weight:700;transform:scaleX(0.8813);">$16M</span>
<span class="t" id="t32" style="left:383.50px;top:141.08px;font-size:24.30px;line-height:29.16px;color:#252423;transform:scaleX(0.8805);">10</span>
<span class="t" id="t33" style="left:365.40px;top:175.80px;font-size:11.30px;line-height:13.56px;color:#a6a6a6;transform:scaleX(1.0139);">New Stores</span>
<span class="t" id="t34" style="left:370.00px;top:233.68px;font-size:24.30px;line-height:29.16px;color:#252423;transform:scaleX(0.9125);">104</span>
<span class="t" id="t35" style="left:357.70px;top:268.10px;font-size:11.30px;line-height:13.56px;color:#a6a6a6;transform:scaleX(1.0192);">Total Stores</span>
<span class="t" id="t36" style="left:479.00px;top:93.66px;font-size:8.40px;line-height:10.08px;color:#c4c4c4;transform:scaleX(1.0516);">Total Sales Variance by FiscalMonth and District Manager</span>
<span class="t" id="t37" style="left:483.50px;top:109.22px;font-size:8.20px;line-height:9.84px;color:#777777;transform:scaleX(0.9664);">$0.3M</span>
<span class="t" id="t38" style="left:483.50px;top:139.75px;font-size:8.20px;line-height:9.84px;color:#777777;transform:scaleX(0.9664);">$0.2M</span>
<span class="t" id="t39" style="left:483.50px;top:170.28px;font-size:8.20px;line-height:9.84px;color:#777777;transform:scaleX(0.9664);">$0.1M</span>
<span class="t" id="t40" style="left:483.50px;top:200.81px;font-size:8.20px;line-height:9.84px;color:#777777;transform:scaleX(0.9664);">$0.0M</span>
<span class="t" id="t41" style="left:478.50px;top:231.34px;font-size:8.20px;line-height:9.84px;color:#777777;transform:scaleX(0.9568);">($0.1M)</span>
<span class="t" id="t42" style="left:478.50px;top:261.87px;font-size:8.20px;line-height:9.84px;color:#777777;transform:scaleX(0.9568);">($0.2M)</span>
<span class="t" id="t43" style="left:538.69px;top:269.77px;font-size:8.20px;line-height:9.84px;color:#777777;transform:scaleX(0.9467);">Jan</span>
<span class="t" id="t44" style="left:578.86px;top:269.77px;font-size:8.20px;line-height:9.84px;color:#777777;transform:scaleX(0.9214);">Feb</span>
<span class="t" id="t45" style="left:618.78px;top:269.77px;font-size:8.20px;line-height:9.84px;color:#777777;transform:scaleX(0.9922);">Mar</span>
<span class="t" id="t46" style="left:659.70px;top:269.77px;font-size:8.20px;line-height:9.84px;color:#777777;transform:scaleX(1.0196);">Apr</span>
<span class="t" id="t47" style="left:699.12px;top:269.77px;font-size:8.20px;line-height:9.84px;color:#777777;transform:scaleX(0.9697);">May</span>
<span class="t" id="t48" style="left:740.79px;top:269.77px;font-size:8.20px;line-height:9.84px;color:#777777;transform:scaleX(0.9467);">Jun</span>
<span class="t" id="t49" style="left:783.06px;top:269.77px;font-size:8.20px;line-height:9.84px;color:#777777;transform:scaleX(0.8406);">Jul</span>
<span class="t" id="t50" style="left:820.63px;top:269.77px;font-size:8.20px;line-height:9.84px;color:#777777;transform:scaleX(0.9946);">Aug</span>
<span class="t" id="t51" style="left:860.10px;top:107.62px;font-size:8.30px;line-height:9.96px;color:#333333;transform:scaleX(0.9995);">DM</span>
<span class="t" id="t52" style="left:869.40px;top:122.02px;font-size:8.30px;line-height:9.96px;color:#666666;transform:scaleX(0.9513);">Allan Guinot</span>
<span class="t" id="t53" style="left:869.40px;top:139.00px;font-size:8.30px;line-height:9.96px;color:#666666;transform:scaleX(0.9650);">Andrew Ma</span>
<span class="t" id="t54" style="left:869.40px;top:155.98px;font-size:8.30px;line-height:9.96px;color:#666666;transform:scaleX(0.9483);">Annelie Zubar</span>
<span class="t" id="t55" style="left:869.40px;top:172.96px;font-size:8.30px;line-height:9.96px;color:#666666;transform:scaleX(0.9469);">Brad Sutton</span>
<span class="t" id="t56" style="left:869.40px;top:189.94px;font-size:8.30px;line-height:9.96px;color:#666666;transform:scaleX(0.9244);">Carlos Grilo</span>
<span class="t" id="t57" style="left:869.40px;top:206.92px;font-size:8.30px;line-height:9.96px;color:#666666;transform:scaleX(0.8952);">Chris Gray</span>
<span class="t" id="t58" style="left:869.40px;top:223.90px;font-size:8.30px;line-height:9.96px;color:#666666;transform:scaleX(0.9267);">Chris McGurk</span>
<span class="t" id="t59" style="left:869.40px;top:240.88px;font-size:8.30px;line-height:9.96px;color:#666666;transform:scaleX(0.8870);">Tina Lassila</span>
<span class="t" id="t60" style="left:869.40px;top:257.86px;font-size:8.30px;line-height:9.96px;color:#666666;transform:scaleX(0.9217);">Valery Ushakov</span>
<span class="t" id="t61" style="left:452.00px;top:327.46px;font-size:8.40px;line-height:10.08px;color:#c4c4c4;transform:scaleX(1.0234);">Total Sales Variance %, Sales Per Sq Ft and This Year Sales by District and District</span>
<span class="t" id="t62" style="left:467.00px;top:343.97px;font-size:8.20px;line-height:9.84px;color:#777777;transform:scaleX(0.9171);">$15.0</span>
<span class="t" id="t63" style="left:467.00px;top:390.09px;font-size:8.20px;line-height:9.84px;color:#777777;transform:scaleX(0.9171);">$14.5</span>
<span class="t" id="t64" style="left:467.00px;top:436.21px;font-size:8.20px;line-height:9.84px;color:#777777;transform:scaleX(0.9171);">$14.0</span>
<span class="t" id="t65" style="left:467.00px;top:482.33px;font-size:8.20px;line-height:9.84px;color:#777777;transform:scaleX(0.9171);">$13.5</span>
<span class="t" id="t66" style="left:467.00px;top:528.45px;font-size:8.20px;line-height:9.84px;color:#777777;transform:scaleX(0.9171);">$13.0</span>
<span class="t" id="t67" style="left:467.00px;top:574.57px;font-size:8.20px;line-height:9.84px;color:#777777;transform:scaleX(0.9171);">$12.5</span>
<span class="t" id="t68" style="left:486.80px;top:583.57px;font-size:8.20px;line-height:9.84px;color:#777777;transform:scaleX(0.8790);">-9%</span>
<span class="t" id="t69" style="left:535.11px;top:583.57px;font-size:8.20px;line-height:9.84px;color:#777777;transform:scaleX(0.8790);">-8%</span>
<span class="t" id="t70" style="left:583.42px;top:583.57px;font-size:8.20px;line-height:9.84px;color:#777777;transform:scaleX(0.8790);">-7%</span>
<span class="t" id="t71" style="left:631.73px;top:583.57px;font-size:8.20px;line-height:9.84px;color:#777777;transform:scaleX(0.8790);">-6%</span>
<span class="t" id="t72" style="left:680.04px;top:583.57px;font-size:8.20px;line-height:9.84px;color:#777777;transform:scaleX(0.8790);">-5%</span>
<span class="t" id="t73" style="left:728.35px;top:583.57px;font-size:8.20px;line-height:9.84px;color:#777777;transform:scaleX(0.8790);">-4%</span>
<span class="t" id="t74" style="left:776.66px;top:583.57px;font-size:8.20px;line-height:9.84px;color:#777777;transform:scaleX(0.8790);">-3%</span>
<span class="t" id="t75" style="left:824.97px;top:583.57px;font-size:8.20px;line-height:9.84px;color:#777777;transform:scaleX(0.8790);">-2%</span>
<span class="t" id="t76" style="left:873.28px;top:583.57px;font-size:8.20px;line-height:9.84px;color:#777777;transform:scaleX(0.8790);">-1%</span>
<span class="t" id="t77" style="left:923.10px;top:583.57px;font-size:8.20px;line-height:9.84px;color:#777777;transform:scaleX(0.8950);">0%</span>
<span class="t" id="t78" style="left:708.75px;top:380.87px;font-size:8.20px;line-height:9.84px;color:#666666;transform:scaleX(1.0069);">FD - 01</span>
<span class="t" id="t79" style="left:898.85px;top:466.27px;font-size:8.20px;line-height:9.84px;color:#666666;transform:scaleX(1.0069);">FD - 02</span>
<span class="t" id="t80" style="left:732.35px;top:484.57px;font-size:8.20px;line-height:9.84px;color:#666666;transform:scaleX(1.0552);">LI - 03</span>
<span class="t" id="t81" style="left:788.95px;top:539.67px;font-size:8.20px;line-height:9.84px;color:#666666;transform:scaleX(1.0552);">LI - 05</span>
<span class="t" id="t82" style="left:494.45px;top:525.67px;font-size:8.20px;line-height:9.84px;color:#666666;transform:scaleX(1.0552);">LI - 01</span>
<span class="t" id="t83" style="left:570.15px;top:543.37px;font-size:8.20px;line-height:9.84px;color:#666666;transform:scaleX(1.0552);">LI - 04</span>
<span class="t" id="t84" style="left:664.25px;top:492.07px;font-size:8.20px;line-height:9.84px;color:#666666;transform:scaleX(1.0552);">LI - 02</span>
<span class="t" id="t85" style="left:662.75px;top:528.77px;font-size:8.20px;line-height:9.84px;color:#666666;transform:scaleX(1.0069);">FD - 03</span>
<span class="t" id="t86" style="left:689.65px;top:538.27px;font-size:8.20px;line-height:9.84px;color:#666666;transform:scaleX(1.0069);">FD - 04</span>
<span class="t" id="t87" style="left:672.00px;top:596.97px;font-size:8.20px;line-height:9.84px;color:#777777;transform:scaleX(0.9211);">Total Sales Variance %</span>
<span class="t" id="t88" style="left:891.40px;top:600.10px;font-size:7.60px;line-height:9.12px;color:#444444;transform:scaleX(0.9868);">obviEnce llc ©</span>
<span class="t" id="t89" style="left:21.00px;top:343.46px;font-size:8.40px;line-height:10.08px;color:#c4c4c4;transform:scaleX(1.0220);">This Year Sales by PostalCode and Store Type</span>
<span class="t" id="t90" style="left:21.00px;top:362.92px;font-size:8.30px;line-height:9.96px;color:#484848;font-weight:700;transform:scaleX(0.8943);">Store Type</span>
<span class="t" id="t91" style="left:73.70px;top:362.92px;font-size:8.30px;line-height:9.96px;color:#4f4f4f;transform:scaleX(0.9294);">New Store</span>
<span class="t" id="t92" style="left:122.40px;top:362.92px;font-size:8.30px;line-height:9.96px;color:#4f4f4f;transform:scaleX(0.9130);">Same Store</span>
<span class="t" id="t93" style="left:36.00px;top:395.16px;font-size:7.30px;line-height:8.76px;color:#645454;transform:scaleX(0.9724);z-index:3;">South Dakota</span>
<span class="t" id="t94" style="left:135.40px;top:393.76px;font-size:7.30px;line-height:8.76px;color:#645454;transform:scaleX(0.9444);z-index:3;">Wisconsin</span>
<span class="t" id="t95" style="left:180.50px;top:408.76px;font-size:7.30px;line-height:8.76px;color:#645454;transform:scaleX(1.0102);z-index:3;">Michigan</span>
<span class="t" id="t96" style="left:112.00px;top:416.26px;font-size:7.30px;line-height:8.76px;color:#645454;transform:scaleX(0.9402);z-index:3;">Iowa</span>
<span class="t" id="t97" style="left:52.40px;top:429.26px;font-size:7.30px;line-height:8.76px;color:#645454;transform:scaleX(0.9317);z-index:3;">Nebraska</span>
<span class="t" id="t98" style="left:24.00px;top:442.97px;font-size:13.20px;line-height:15.84px;color:#111111;font-weight:700;transform:scaleX(0.9172);z-index:3;">United States</span>
<span class="t" id="t99" style="left:143.00px;top:441.56px;font-size:7.30px;line-height:8.76px;color:#645454;transform:scaleX(0.9713);z-index:3;">Illinois</span>
<span class="t" id="t100" style="left:169.20px;top:453.86px;font-size:7.30px;line-height:8.76px;color:#645454;transform:scaleX(0.8976);z-index:3;">Indiana</span>
<span class="t" id="t101" style="left:67.80px;top:464.06px;font-size:7.30px;line-height:8.76px;color:#645454;transform:scaleX(0.8421);z-index:3;">Kansas</span>
<span class="t" id="t102" style="left:118.00px;top:470.26px;font-size:7.30px;line-height:8.76px;color:#645454;transform:scaleX(0.9422);z-index:3;">Missouri</span>
<span class="t" id="t103" style="left:174.70px;top:476.06px;font-size:7.30px;line-height:8.76px;color:#645454;transform:scaleX(0.9595);z-index:3;">Kentucky</span>
<span class="t" id="t104" style="left:70.50px;top:492.46px;font-size:7.30px;line-height:8.76px;color:#645454;transform:scaleX(0.9770);z-index:3;">Oklahoma</span>
<span class="t" id="t105" style="left:160.70px;top:491.06px;font-size:7.30px;line-height:8.76px;color:#645454;transform:scaleX(0.9576);z-index:3;">Tennessee</span>
<span class="t" id="t106" style="left:110.50px;top:505.76px;font-size:7.30px;line-height:8.76px;color:#645454;transform:scaleX(0.8974);z-index:3;">Arkansas</span>
<span class="t" id="t107" style="left:162.70px;top:525.16px;font-size:7.30px;line-height:8.76px;color:#645454;transform:scaleX(0.9371);z-index:3;">Alabama</span>
<span class="t" id="t108" style="left:69.50px;top:535.76px;font-size:7.30px;line-height:8.76px;color:#645454;transform:scaleX(0.8603);z-index:3;">Texas</span>
<span class="t" id="t109" style="left:132.70px;top:535.76px;font-size:7.30px;line-height:8.76px;color:#645454;transform:scaleX(0.9382);z-index:3;">Mississippi</span>
<span class="t" id="t110" style="left:192.40px;top:535.76px;font-size:7.30px;line-height:8.76px;color:#645454;transform:scaleX(0.9588);z-index:3;">Georgia</span>
<span class="t" id="t111" style="left:116.60px;top:546.36px;font-size:7.30px;line-height:8.76px;color:#645454;transform:scaleX(0.9504);z-index:3;">Louisiana</span>
<span class="t" id="t112" style="left:210.20px;top:574.56px;font-size:7.30px;line-height:8.76px;color:#645454;transform:scaleX(0.8874);z-index:3;">Florida</span>
<span class="t" id="t113" style="left:258.80px;top:390.49px;font-size:10.20px;line-height:12.24px;color:#4a4444;transform:scaleX(0.8984);z-index:3;">Ottawa</span>
<span class="t" id="t114" style="left:318.50px;top:386.26px;font-size:7.30px;line-height:8.76px;color:#645454;transform:scaleX(0.9459);z-index:3;">Maine</span>
<span class="t" id="t115" style="left:353.30px;top:389.36px;font-size:7.30px;line-height:8.76px;color:#645454;transform:scaleX(0.9201);z-index:3;">Nova Scotia</span>
<span class="t" id="t116" style="left:296.30px;top:394.46px;font-size:7.30px;line-height:8.76px;color:#645454;transform:scaleX(0.8406);z-index:3;">Vt.</span>
<span class="t" id="t117" style="left:302.00px;top:402.26px;font-size:7.30px;line-height:8.76px;color:#645454;transform:scaleX(0.8488);z-index:3;">N.H.</span>
<span class="t" id="t118" style="left:261.50px;top:415.96px;font-size:7.30px;line-height:8.76px;color:#645454;transform:scaleX(0.9423);z-index:3;">N.Y.</span>
<span class="t" id="t119" style="left:293.00px;top:419.06px;font-size:7.30px;line-height:8.76px;color:#645454;transform:scaleX(0.7859);z-index:3;">Mass.</span>
<span class="t" id="t120" style="left:305.50px;top:430.56px;font-size:7.30px;line-height:8.76px;color:#645454;transform:scaleX(0.6955);z-index:3;">R.I.</span>
<span class="t" id="t121" style="left:278.60px;top:449.36px;font-size:7.30px;line-height:8.76px;color:#645454;transform:scaleX(0.8395);z-index:3;">N.J.</span>
<span class="t" id="t122" style="left:324.00px;top:407.16px;font-size:8.60px;line-height:10.32px;color:#3560c0;transform:scaleX(0.8686);z-index:3;">Gulf of</span>
<span class="t" id="t123" style="left:326.50px;top:416.26px;font-size:8.60px;line-height:10.32px;color:#3560c0;transform:scaleX(0.9613);z-index:3;">Maine</span>
<span class="t" id="t124" style="left:37.00px;top:564.59px;font-size:11.50px;line-height:13.80px;color:#222222;transform:scaleX(0.8163);z-index:3;">Bing</span>
<span class="t" id="t125" style="left:261.20px;top:572.72px;font-size:7.00px;line-height:8.40px;color:#222222;transform:scaleX(0.9613);z-index:3;">© 2019 HERE, © 2019 Microsoft Corporation</span>
<span class="t" id="t126" style="left:399.40px;top:572.92px;font-size:7.00px;line-height:8.40px;color:#3b4ea0;transform:scaleX(0.9652);z-index:3;text-decoration:underline;">Terms</span>
</body></html>
